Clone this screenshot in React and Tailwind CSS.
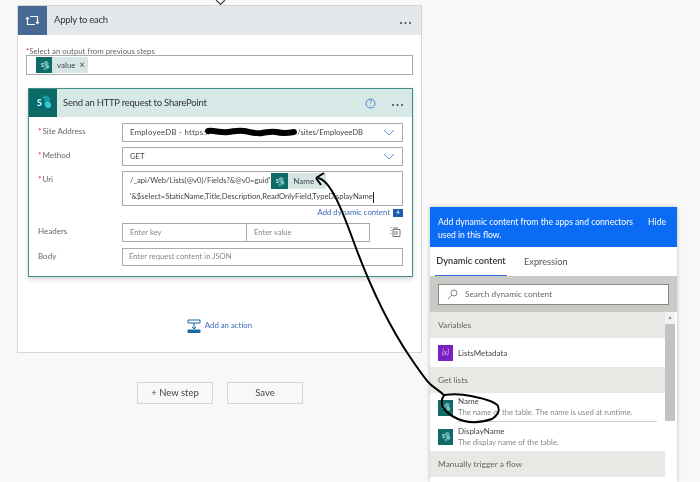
const font = { fontFamily: 'Lato, "Open Sans", sans-serif' };

function SpGlyph({ s = 16, big = false }) {
  return (
    <svg width={s} height={s} viewBox="0 0 16 16">
      <circle cx="10" cy="5.500" r="3" fill={big ? "#1a9ba1" : "#5fb0b0"} />
      <circle cx="11.500" cy="9.500" r="2.400" fill={big ? "#37c6d0" : "#7cc6c6"} />
      <circle cx="8.500" cy="12" r="2" fill={big ? "#0b6a70" : "#4f9f9f"} />
      {big && <rect x="2" y="4.500" width="7" height="7" rx="1" fill="#036c70" />}
      <text x="5.500" y="10.300" textAnchor="middle" fontSize="6.500" fontWeight="700" fill="#dff" fontFamily="Lato, sans-serif">S</text>
    </svg>
  );
}

function Token({ label, x }) {
  return (
    <span className="inline-flex h-[16px] items-center bg-[#d5e6e4] text-[8px] text-[#444]">
      <span className="flex h-[16px] w-[16px] items-center justify-center bg-[#0f6b66]"><SpGlyph s={13} /></span>
      <span className="pl-[5px] pr-[3px]">{label}</span>
      {x && <span className="pl-[1px] pr-[3px] text-[9px]">×</span>}
    </span>
  );
}

function Chevron() {
  return (
    <svg width="12" height="7" viewBox="0 0 12 7" fill="none" stroke="#5b8fd4" strokeWidth="1">
      <path d="M1 1l5 5 5-5" />
    </svg>
  );
}

function Label({ req, children, className = "" }) {
  return (
    <div className={`w-[93px] shrink-0 pl-[9px] text-[8px] text-[#666] ${className}`}>
      {req && <span className="mr-[1px] text-[#c8412c]">*</span>}
      {children}
    </div>
  );
}

function Kebab() {
  return <span className="relative top-[-1px] text-[11px] font-bold leading-none tracking-[1.5px] text-[#555]">···</span>;
}

function DynRow({ name, desc, rule }) {
  return (
    <div className="flex h-[29px] items-center pl-[8px] pr-[8px]">
      <div className="flex h-[16px] w-[15px] shrink-0 items-center justify-center bg-[#0f6b66]"><SpGlyph s={13} /></div>
      <div className={`ml-[5px] flex h-full flex-1 flex-col justify-center leading-[11px] ${rule ? "border-b border-[#cfcfcf]" : ""}`}>
        <div className="text-[8px] text-[#444]">{name}</div>
        <div className="text-[7.7px] text-[#888]">{desc}</div>
      </div>
    </div>
  );
}

function GroupHead({ children }) {
  return <div className="flex h-[26px] items-center bg-[#e8e8e4] pl-[8px] text-[8.4px] text-[#666]">{children}</div>;
}

export default function App() {
  return (
    <div style={font} className="relative flex h-[482px] w-[700px] overflow-hidden bg-[#f8f8f8] blur-[0.3px]">
      <div className="ml-[17px] w-[405px] shrink-0 pt-[5px]">
        <div className="h-[348px] border border-[#d6d6d6] bg-white">
          <div className="flex h-[29px] items-center bg-[#e4e7ec]">
            <div className="flex h-[29px] w-[29px] items-center justify-center bg-[#466a94]">
              <svg width="15" height="13" viewBox="0 0 15 13" fill="none" stroke="#fff" strokeWidth="1.100">
                <path d="M2.500 3.500V10.500H10" /><path d="M12.500 9.500V2.500H5" /><path d="M1 5l1.500-1.500L4 5" /><path d="M11 8l1.500 1.500L14 8" />
              </svg>
            </div>
            <div className="ml-[7px] flex-1 text-[9.5px] tracking-[-0.25px] text-[#333]">Apply to each</div>
            <div className="mr-[8px]"><Kebab /></div>
          </div>
          <div className="px-[8px] pt-[12px]">
            <div className="h-[8px] text-[7.8px] leading-[8px] text-[#666]"><span className="text-[#c8412c]">*</span>Select an output from previous steps</div>
            <div className="flex h-[20px] items-center border border-[#aaa] pl-[9px]">
              <Token label="value" x />
            </div>
          </div>
          <div className="mx-[10px] mt-[13px] h-[189px] w-[385px] border border-[#3f8c88] bg-white shadow-[0_2px_5px_rgba(0,0,0,0.18)]">
            <div className="flex h-[28px] items-center bg-[#d7e9e6]">
              <div className="flex h-[28px] w-[28px] items-center justify-center bg-[#0c6a66]"><SpGlyph s={22} big /></div>
              <div className="ml-[6px] flex-1 text-[9.5px] tracking-[-0.25px] text-[#333]">Send an HTTP request to SharePoint</div>
              <svg width="11" height="11" viewBox="0 0 11 11" className="mr-[15px]">
                <circle cx="5.500" cy="5.500" r="4.500" fill="none" stroke="#4a7fd0" />
                <text x="5.500" y="8" fontSize="7" textAnchor="middle" fill="#4a7fd0">?</text>
              </svg>
              <div className="mr-[7px]"><Kebab /></div>
            </div>
            <div className="pr-[9px] pt-[6px]">
              <div className="flex items-start">
                <Label req className="pt-[2px]">Site Address</Label>
                <div className="flex h-[19px] flex-1 items-center justify-between border border-[#aaa] pl-[7px] pr-[7px] text-[7.7px] text-[#444]">
                  <span className="flex items-center whitespace-nowrap"><span className="tracking-[0.3px]">EmployeeDB - https://</span><span className="inline-block w-[86px] shrink-0" /><span>/sites/EmployeeDB</span></span>
                  <Chevron />
                </div>
              </div>
              <div className="mt-[5px] flex items-start">
                <Label req className="pt-[2px]">Method</Label>
                <div className="flex h-[19px] flex-1 items-center justify-between border border-[#aaa] pl-[7px] pr-[7px] text-[7.7px] text-[#444]">
                  <span>GET</span>
                  <Chevron />
                </div>
              </div>
              <div className="mt-[5px] flex items-start">
                <Label req className="pt-[2px]">Uri</Label>
                <div className="h-[35px] flex-1 border border-[#aaa] pl-[7px] text-[7.65px] text-[#444]">
                  <div className="flex h-[17px] items-center pt-[1px]">
                    <span>/_api/Web/Lists(@v0)/Fields?&amp;@v0=guid'</span>
                    <span className="ml-[1px] inline-flex h-[16px] items-center bg-[#d5e6e4]">
                      <span className="flex h-[16px] w-[17px] items-center justify-center bg-[#0f6b66]"><SpGlyph s={13} /></span>
                      <span className="pl-[5px] pr-[12px] text-[8px]">Name</span>
                    </span>
                  </div>
                  <div className="flex h-[16px] items-center whitespace-nowrap">
                    <span>'&amp;$select=StaticName,Title,Description,ReadOnlyField,TypeDisplayName</span>
                    <span className="h-[11px] w-px bg-[#222]" />
                  </div>
                </div>
              </div>
              <div className="flex h-[13px] items-center justify-end text-[7.75px] text-[#3a6bb5]">
                <span>Add dynamic content</span>
                <span className="ml-[3px] flex h-[8px] w-[10px] items-center justify-center bg-[#1a5fae] text-[7px] font-bold leading-none text-white">+</span>
              </div>
              <div className="mt-[4px] flex items-start">
                <Label className="pt-[2px]">Headers</Label>
                <div className="flex h-[19px] w-[248px] border border-[#aaa] text-[7.7px] text-[#888]">
                  <div className="flex w-[124px] items-center border-r border-[#aaa] pl-[7px]">Enter key</div>
                  <div className="flex flex-1 items-center pl-[7px]">Enter value</div>
                </div>
                <svg width="11" height="11" viewBox="0 0 11 11" fill="none" stroke="#555" strokeWidth="0.800" className="ml-[20px] mt-[3px]">
                  <path d="M3 3.500h7v7H3z" /><path d="M5 5v4M7 5v4M3 2h5" /><path d="M1 1v1M1 4v1M1 7v1" strokeDasharray="1 1" />
                </svg>
              </div>
              <div className="mt-[6px] flex items-start">
                <Label className="pt-[2px]">Body</Label>
                <div className="flex h-[18px] flex-1 items-center border border-[#aaa] pl-[6px] text-[7.7px] text-[#888]">Enter request content in JSON</div>
              </div>
            </div>
          </div>
          <div className="mt-[42px] flex items-center justify-center">
            <svg width="14" height="14" viewBox="0 0 14 14" fill="none" stroke="#1a6aa8">
              <path d="M1 1h12v3H1z" /><path d="M7 4v6M5 8l2 2 2-2" />
              <path d="M1 11h12v2.500H1z" fill="#1a6aa8" />
            </svg>
            <span className="ml-[4px] text-[7.8px] text-[#3a6bb5]">Add an action</span>
          </div>
        </div>
        <div className="mt-[29px] flex pl-[120px]">
          <div className="flex h-[22px] w-[76px] items-center justify-center border border-[#d4d4d4] text-[9.5px] text-[#444]">+ New step</div>
          <div className="ml-[14px] flex h-[22px] w-[76px] items-center justify-center border border-[#d4d4d4] text-[9.5px] text-[#444]">Save</div>
        </div>
      </div>

      <div className="ml-[8px] mt-[207px] h-[275px] w-[247px] shrink-0 bg-white shadow-[0_0_4px_rgba(0,0,0,0.25)]">
        <div className="flex h-[40px] bg-[#0a6cf5] pl-[8px] pr-[11px] pt-[9px] text-[8.6px] leading-[13px] text-white">
          <div className="w-[205px]">Add dynamic content from the apps and connectors used in this flow.</div>
          <div className="ml-auto">Hide</div>
        </div>
        <div className="flex h-[29px] items-stretch px-[5px] text-[9.2px]">
          <div className="flex w-[72px] items-center justify-center whitespace-nowrap border-b border-[#2f6fd6] font-semibold text-[#333]">Dynamic content</div>
          <div className="ml-[17px] flex items-center text-[#555]">Expression</div>
        </div>
        <div className="h-[36px] bg-[#c9c9c5] px-[8px] pt-[8px]">
          <div className="flex h-[21px] items-center border border-[#888] bg-white pl-[8px] text-[8.3px] text-[#666]">
            <svg width="11" height="11" viewBox="0 0 11 11" fill="none" stroke="#666" strokeWidth="0.800"><circle cx="7" cy="4" r="3" /><path d="M4.800 6.200L1 10" /></svg>
            <span className="ml-[7px]">Search dynamic content</span>
          </div>
        </div>
        <div className="flex">
          <div className="w-[235px] shrink-0">
            <GroupHead>Variables</GroupHead>
            <div className="flex h-[29px] items-center pl-[8px]">
              <div className="flex h-[16px] w-[15px] items-center justify-center bg-[#7a1fc2] text-[7px] italic text-[#d9b8f2]">{"{x}"}</div>
              <span className="ml-[5px] text-[8px] text-[#444]">ListsMetadata</span>
            </div>
            <GroupHead>Get lists</GroupHead>
            <DynRow name="Name" desc="The name of the table. The name is used at runtime." rule />
            <DynRow name="DisplayName" desc="The display name of the table." />
            <GroupHead>Manually trigger a flow</GroupHead>
          </div>
          <div className="w-[10px]">
            <div className="flex h-[12px] items-center justify-center bg-[#f2f2f2] text-[5px] text-[#888]">▲</div>
            <div className="h-[97px] bg-[#c2c2c2]" />
          </div>
        </div>
      </div>

      <svg className="pointer-events-none absolute left-0 top-0" width="700" height="482" viewBox="0 0 700 482" fill="none">
        <path d="M216 0l4.500 4.500L225 0" stroke="#444" strokeWidth="1.200" />
        <path d="M208 131c6-1 12 2 20 1s10-2 16-1 12 3 18 2 10-2 14-1 12 1 18 0" stroke="#000" strokeWidth="6" strokeLinecap="round" />
        <path d="M318 178C330 180 341 207 353 240S385 320 410 357S430 382 445 396" stroke="#000" strokeWidth="2" />
        <path d="M316 178l8-5M316 178l5 7" stroke="#000" strokeWidth="2" />
        <path d="M444 395c8-1 18-1 27 1 10 2 24 5 27 10 2 5-1 10-6 13-9 3-20 4-28 2-8-2-15-6-20-12-3-4-3-9 0-14" stroke="#000" strokeWidth="2" />
      </svg>
    </div>
  );
}
